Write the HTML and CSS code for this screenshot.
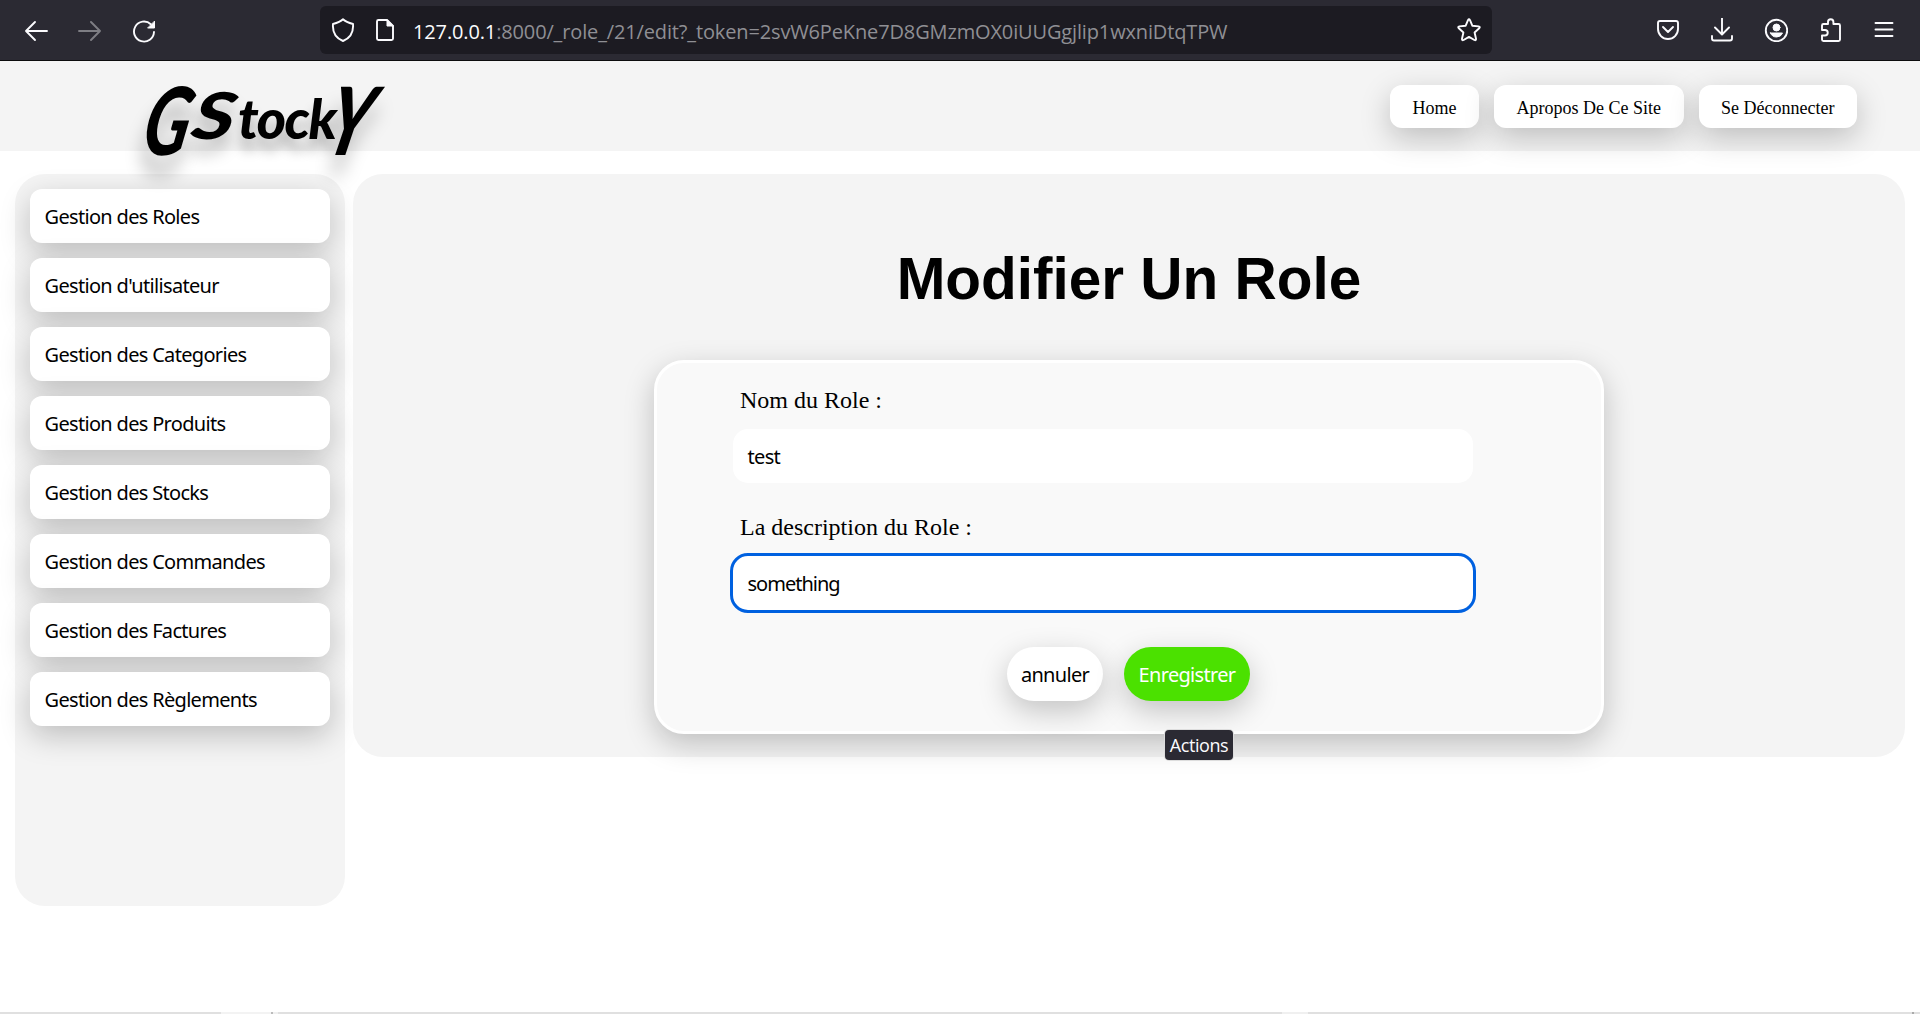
FILE: index.html
```html
<!DOCTYPE html>
<html lang="fr">
<head>
<meta charset="utf-8">
<title>Modifier Un Role</title>
<link rel="stylesheet" href="styles.css">
</head>
<body>
<div class="toolbar">
  <div class="nav-icons">
    <svg class="icon" viewBox="0 0 24 24"><path d="M23 12H2M11 3L2 12l9 9"/></svg>
    <svg class="icon dim" viewBox="0 0 24 24"><path d="M1 12h21M13 3l9 9-9 9"/></svg>
    <svg class="icon" viewBox="0 0 24 24"><path d="M22 13a10 10 0 1 1-3.2-7.8"/><path class="fill" d="M22.500 2.500v6.500h-6.500z"/></svg>
  </div>
  <div class="url-bar">
    <svg class="icon" viewBox="0 0 24 24"><path d="M12 1.2C9 4 5.500 5 2 6c-.6 7 1.500 13.500 10 17 8.500-3.500 10.600-10 10-17-3.500-1-7-2-10-4.800z"/></svg>
    <svg class="icon page" viewBox="0 0 24 24"><path d="M14 2H5.500Q4 2 4 3.500v17Q4 22 5.500 22h13q1.500 0 1.500-1.500V8z"/><path class="fill" d="M14 2v6h6z"/></svg>
    <span class="url"><b>127.0.0.1</b>:8000/_role_/21/edit?_token=2svW6PeKne7D8GMzmOX0iUUGgjlip1wxniDtqTPW</span>
    <svg class="icon star" viewBox="0 0 24 24"><path d="M11 2.200q1-1.800 2 0L15.300 7.700l6.300.7q2 .4.600 1.900l-4.600 4.200 1.400 6.300q.2 2-1.600 1.200L12 18.900 6.600 22q-1.800.8-1.600-1.200l1.400-6.300-4.600-4.200Q.4 8.800 2.400 8.400l6.300-.7z"/></svg>
  </div>
  <div class="tools">
    <svg class="icon" viewBox="0 0 24 24"><path d="M4 3h16q2 0 2 2v6a10 10 0 0 1-20 0V5q0-2 2-2zM7 9l5 5 5-5"/></svg>
    <svg class="icon" viewBox="0 0 24 24"><path d="M12 0v16M5 9.500l7 7 7-7M2 18v2.500Q2 22.500 4 22.500h16q2 0 2-2V18"/></svg>
    <svg class="icon" viewBox="0 0 24 24"><circle cx="12.500" cy="12.500" r="10.700"/><circle class="fill" cx="12.500" cy="9.500" r="3.500"/><path class="fill" d="M6.500 15h12q-1.500 4-6 4t-6-4z"/></svg>
    <svg class="icon" viewBox="0 0 24 24"><path d="M4 12V7.500Q4 6 5.500 6H10V4a2.700 2.700 0 0 1 5.400 0v2h5.100Q22 6 22 7.500v14q0 1.500-1.500 1.500h-15Q4 23 4 21.500V17.500h3a2.700 2.700 0 0 0 0-5.500z"/></svg>
    <svg class="icon" viewBox="0 0 24 24"><path d="M3.500 5h17M3.500 11.500h17M3.500 18h17"/></svg>
  </div>
</div>
<header class="header">
  <div class="logo"><span class="swash">G</span><span class="wide">S</span>tock<span class="swash last">Y</span></div>
  <nav class="links"><a>Home</a><a>Apropos De Ce Site</a><a>Se Déconnecter</a></nav>
</header>
<div class="layout">
  <aside class="sidebar">
    <a>Gestion des Roles</a>
    <a>Gestion d'utilisateur</a>
    <a>Gestion des Categories</a>
    <a>Gestion des Produits</a>
    <a>Gestion des Stocks</a>
    <a>Gestion des Commandes</a>
    <a>Gestion des Factures</a>
    <a>Gestion des Règlements</a>
  </aside>
  <main class="main">
    <h1>Modifier Un Role</h1>
    <form class="card">
      <label>Nom du Role :</label>
      <div class="field">test</div>
      <label>La description du Role :</label>
      <div class="field focused">something</div>
      <div class="actions">
        <span class="btn">annuler</span>
        <span class="btn save">Enregistrer<span class="tooltip">Actions</span></span>
      </div>
    </form>
  </main>
</div>
<footer class="strip"><i class="seg-a"></i><i class="seg-b"></i><i class="seg-c"></i><i class="seg-d"></i></footer>
</body>
</html>
```
FILE: styles.css
```css
* { box-sizing: border-box; }
body {
  margin: 0;
  height: 1014px;
  display: flex;
  flex-direction: column;
  overflow: hidden;
  background: #fff;
  color: #000;
  font-family: "Liberation Serif", serif;
}
.toolbar {
  display: flex;
  flex: none;
  height: 61px;
  background: #2b2a33;
  border-bottom: 1px solid #0c0c0d;
}
.icon {
  width: 24px;
  height: 24px;
  flex: none;
  fill: none;
  stroke: #fbfbfe;
  stroke-width: 1.9;
  stroke-linecap: round;
  stroke-linejoin: round;
}
.icon .fill { fill: #fbfbfe; stroke-width: 1; }
.dim { opacity: .4; }
.nav-icons {
  display: flex;
  gap: 30px;
  width: 320px;
  padding: 19px 0 0 24px;
}
.url-bar {
  display: flex;
  align-items: center;
  width: 1172px;
  height: 48px;
  margin-top: 6px;
  padding: 0 11px;
  border-radius: 6px;
  background: #1c1b22;
}
.page { margin-left: 18px; }
.url {
  flex: 1;
  margin-left: 16px;
  padding-top: 3px;
  color: #8f8f94;
  font: 20px/45px "Open Sans", "Noto Sans", sans-serif;
  letter-spacing: -.14px;
  white-space: nowrap;
}
.url b { font-weight: 400; color: #fbfbfe; }
.tools {
  display: flex;
  gap: 30px;
  padding: 18px 0 0 164px;
}
.header {
  display: flex;
  flex: none;
  justify-content: space-between;
  height: 90px;
  padding: 0 63px 0 154px;
  background: #f4f4f4;
}
.logo {
  font: italic 900 56px/114px Lato, sans-serif;
  letter-spacing: -1.5px;
  text-shadow: 0 12px 12px rgba(0, 0, 0, .25);
  white-space: nowrap;
}
.swash, .wide { display: inline-block; transform-origin: 50% 37px; }
.swash { transform: translate(3px, -12px) scale(1.2, 1.68) skewX(-16deg); }
.wide { transform: translate(4px, -6px) scale(1.45, 1.15) skewX(-8deg); margin: 0 10px 0 10px; }
.last { margin-left: 3px; transform: translate(3px, -12px) scale(1.25, 1.68) skewX(-18deg); }
.links { display: flex; gap: 15px; padding-top: 24px; }
.links a {
  height: 43px;
  padding: 0 22.5px;
  border-radius: 12px;
  background: #fff;
  font-size: 18px;
  line-height: 47px;
  box-shadow: 0 10px 30px rgba(0, 0, 0, .22);
}
.layout {
  display: flex;
  align-items: flex-start;
  gap: 8px;
  padding: 23px 15px 0;
}
.sidebar {
  display: flex;
  flex-direction: column;
  gap: 15px;
  width: 330px;
  height: 732px;
  padding: 15px;
  border-radius: 30px;
  background: #f4f4f4;
}
.sidebar a, .field, .btn {
  font: 20px/56px "Noto Sans", sans-serif;
  letter-spacing: -.68px;
}
.sidebar a {
  height: 54px;
  padding: 0 14.5px;
  border-radius: 12px;
  background: #fff;
  box-shadow: 0 10px 30px rgba(0, 0, 0, .22);
}
.main {
  display: flex;
  flex-direction: column;
  align-items: center;
  width: 1552px;
  height: 583px;
  border-radius: 30px;
  background: #f4f4f4;
}
h1 {
  margin: 71px 0 47px;
  font: 700 58.500px/68px "Liberation Sans", sans-serif;
}
.card {
  width: 950px;
  height: 374px;
  padding: 24px 76px 0;
  border: 3px solid #fff;
  border-radius: 30px;
  background: #f9f9f9;
  box-shadow: 0 10px 30px rgba(0, 0, 0, .22);
}
label {
  display: block;
  height: 42px;
  padding-left: 7px;
  font-size: 24px;
  line-height: 26px;
}
.field {
  width: 740px;
  height: 54px;
  margin-bottom: 31px;
  padding: 0 14.5px;
  border-radius: 15px;
  background: #fff;
}
.focused { outline: 3px solid #0061e0; margin-bottom: 37px; letter-spacing: -1px; }
.actions { display: flex; gap: 21px; padding-left: 274px; }
.btn {
  position: relative;
  width: 96px;
  height: 54px;
  border-radius: 27px;
  background: #fff;
  text-align: center;
  box-shadow: 0 10px 30px rgba(0, 0, 0, .22);
}
.save { width: 126px; background: #4be100; color: #fff; }
.tooltip {
  position: absolute;
  left: 41px;
  top: 83px;
  width: 68px;
  height: 30px;
  border-radius: 4px;
  background: #2b2a33;
  box-shadow: 0 0 0 1px #ddd;
  color: #fbfbfe;
  font: 18px/31px "Open Sans", sans-serif;
  letter-spacing: -.4px;
}
.strip {
  display: flex;
  flex: none;
  height: 2px;
  margin-top: auto;
  background: #e0e0e0;
}
.seg-a { width: 50px; margin-left: 221px; background: #f3f3f3; }
.seg-b { width: 7px; border-left: 2px solid #bbb; background: #f0f0f0; }
.seg-c { width: 26px; margin-left: 1004px; background: #f0f0f0; }
.seg-d { width: 2px; margin-left: 604px; background: #aaa; }
```
